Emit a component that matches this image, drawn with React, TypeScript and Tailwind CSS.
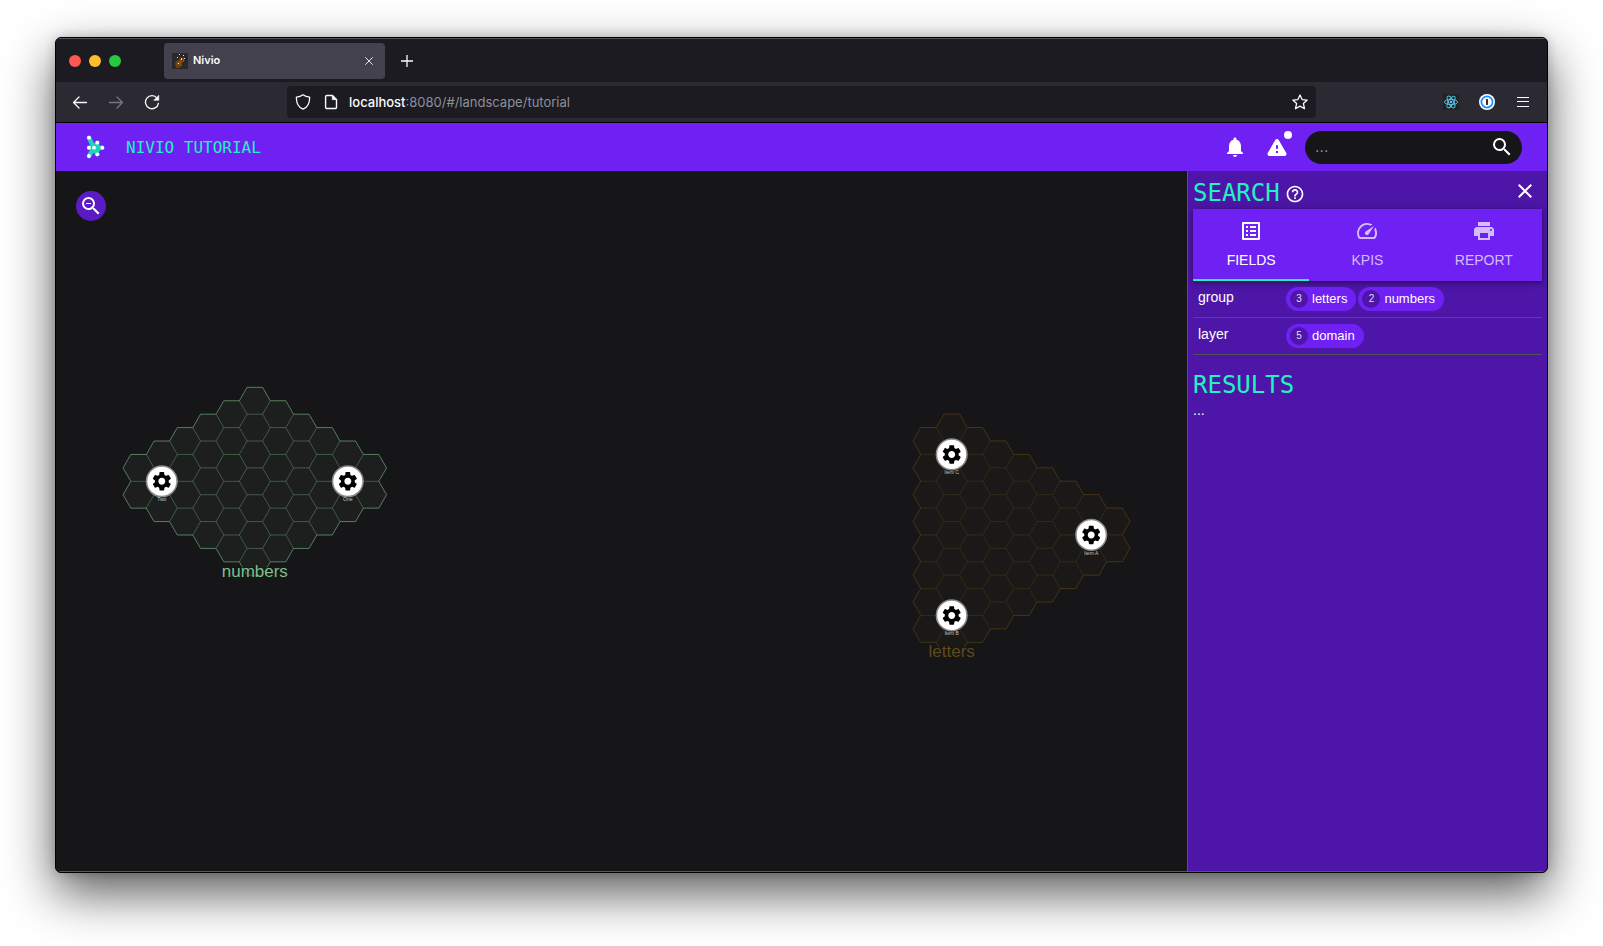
import React from "react";
import {
  MdNotifications,
  MdSearch,
  MdClose,
  MdHelpOutline,
  MdListAlt,
  MdSpeed,
  MdPrint,
  MdZoomOut,
} from "react-icons/md";

type Column = { col: number; count: number };
type Item = { x: number; y: number; label: string };
type Cluster = {
  name: string;
  originX: number;
  centerY: number;
  columns: Column[];
  items: Item[];
  labelX: number;
  labelY: number;
  color: string;
  fill: string;
  inner: number;
};

const SIDE = 15.5;
const HEX_H = 26.85;
const COL_W = 23.25;

const CLUSTERS: Cluster[] = [
  {
    name: "numbers",
    originX: 254.8,
    centerY: 481.3,
    columns: [-5, -4, -3, -2, -1, 0, 1, 2, 3, 4, 5].map((col) => ({ col, count: 7 - Math.abs(col) })),
    items: [
      { x: 161.8, y: 481.3, label: "Two" },
      { x: 347.8, y: 481.3, label: "One" },
    ],
    labelX: 254.8,
    labelY: 577,
    color: "#7fbf8a",
    fill: "#1c1f1e",
    inner: 0.38,
  },
  {
    name: "letters",
    originX: 928.5,
    centerY: 534.9,
    columns: [8, 9, 8, 7, 6, 5, 4, 3, 2].map((count, col) => ({ col, count })),
    items: [
      { x: 951.7, y: 454.4, label: "Item C" },
      { x: 1091.2, y: 534.9, label: "Item A" },
      { x: 951.7, y: 615.4, label: "Item B" },
    ],
    labelX: 951.7,
    labelY: 657,
    color: "#5f4a16",
    fill: "#1a1917",
    inner: 0.38,
  },
];

function buildHexes(cluster: Cluster) {
  const edges = new Map<string, { d: string; uses: number }>();
  const cells: string[] = [];
  cluster.columns.forEach(({ col, count }) => {
    const cx = cluster.originX + col * COL_W;
    for (let i = 0; i < count; i++) {
      const cy = cluster.centerY + (i - (count - 1) / 2) * HEX_H;
      const pts = [
        [cx - SIDE, cy],
        [cx - SIDE / 2, cy - HEX_H / 2],
        [cx + SIDE / 2, cy - HEX_H / 2],
        [cx + SIDE, cy],
        [cx + SIDE / 2, cy + HEX_H / 2],
        [cx - SIDE / 2, cy + HEX_H / 2],
      ];
      cells.push(pts.map((p) => p.map((n) => n.toFixed(2)).join(",")).join(" "));
      pts.forEach((a, k) => {
        const b = pts[(k + 1) % 6];
        const key = `${Math.round(a[0] + b[0])}:${Math.round((a[1] + b[1]) / 2)}`;
        const known = edges.get(key);
        if (known) known.uses += 1;
        else edges.set(key, { d: `M${a[0].toFixed(2)} ${a[1].toFixed(2)}L${b[0].toFixed(2)} ${b[1].toFixed(2)}`, uses: 1 });
      });
    }
  });
  const all = [...edges.values()];
  return {
    cells,
    outer: all.filter((e) => e.uses === 1).map((e) => e.d).join(""),
    inner: all.filter((e) => e.uses > 1).map((e) => e.d).join(""),
  };
}

const GEAR =
  "M19.14 12.94c.04-.3.06-.61.06-.94 0-.32-.02-.64-.07-.94l2.03-1.58a.49.49 0 0 0 .12-.61l-1.92-3.32a.488.488 0 0 0-.59-.22l-2.39.96c-.5-.38-1.03-.7-1.62-.94l-.36-2.54a.484.484 0 0 0-.48-.41h-3.84c-.24 0-.43.17-.47.41l-.36 2.54c-.59.24-1.13.57-1.62.94l-2.39-.96c-.22-.08-.47 0-.59.22L2.74 8.87c-.12.21-.08.47.12.61l2.03 1.58c-.05.3-.09.63-.09.94s.02.64.07.94l-2.03 1.58a.49.49 0 0 0-.12.61l1.92 3.32c.12.22.37.29.59.22l2.39-.96c.5.38 1.03.7 1.62.94l.36 2.54c.05.24.24.41.48.41h3.84c.24 0 .44-.17.47-.41l.36-2.54c.59-.24 1.13-.56 1.62-.94l2.39.96c.22.08.47 0 .59-.22l1.92-3.32c.12-.22.07-.47-.12-.61l-2.01-1.58zM12 15.6c-1.98 0-3.6-1.62-3.6-3.6s1.62-3.6 3.6-3.6 3.6 1.62 3.6 3.6-1.62 3.6-3.6 3.6z";

function ClusterShape({ cluster }: { cluster: Cluster }) {
  const { cells, outer, inner } = buildHexes(cluster);
  return (
    <g>
      {cells.map((points) => (
        <polygon key={points} points={points} fill={cluster.fill} />
      ))}
      <path d={inner} stroke={cluster.color} strokeOpacity={cluster.inner} fill="none" />
      <path d={outer} stroke={cluster.color} strokeOpacity={0.6} fill="none" />
      <text
        x={cluster.labelX}
        y={cluster.labelY}
        textAnchor="middle"
        fill={cluster.color}
        stroke="#161618"
        strokeOpacity={0.6}
        strokeWidth={3}
        paintOrder="stroke"
        className="text-[17px]"
      >
        {cluster.name}
      </text>
      {cluster.items.map((item) => (
        <g key={item.label}>
          <circle cx={item.x} cy={item.y} r={15.3} fill="#fff" stroke="#8a8a8a" strokeWidth={1.5} />
          <path d={GEAR} transform={`translate(${item.x - 11.5} ${item.y - 11.5}) scale(0.96)`} fill="#000" />
          <text x={item.x} y={item.y + 20} textAnchor="middle" fill="#c4c4c4" className="text-[5px]">
            {item.label}
          </text>
        </g>
      ))}
    </g>
  );
}

function Favicon() {
  return (
    <svg viewBox="0 0 16 16" className="size-4">
      <rect width="16" height="16" fill="#29282b" />
      <path d="M3 11l1-3 3-1 1-3 2 1 2 0 0 3-2 2 0 3-3 2-3 0z" fill="#6e3d0c" />
      <path d="M5 12l2-4M8 13l1-6M11 9l1-4" stroke="#9a5716" strokeWidth="1" />
      <g fill="#f3e2c8">
        <rect x="7" y="1" width="1" height="1" />
        <rect x="5" y="4" width="1" height="1" />
        <rect x="9" y="5" width="1" height="2" />
        <rect x="11" y="2" width="1" height="1" />
        <rect x="12" y="5" width="1" height="1" />
        <rect x="6" y="10" width="1" height="1" />
      </g>
    </svg>
  );
}

const LOGO_NODES: [number, number][] = [
  [3, 2.7],
  [11.3, 7.7],
  [3, 12.7],
  [8, 12.7],
  [16.3, 12.7],
  [11.3, 19.3],
  [3, 21],
];

function Logo() {
  return (
    <svg viewBox="0 0 20 24" className="h-6 w-5" aria-hidden="true">
      <path
        d="M3 2.7L8 12.7L11.3 7.7M3 12.7H16.3M3 21L8 12.7L11.3 19.3"
        stroke="#1ad6b4"
        strokeWidth="4.4"
        strokeLinejoin="round"
        strokeLinecap="round"
        fill="none"
      />
      <path d="M8 12.7L11.3 7.7L16.3 12.7L11.3 19.3Z" fill="#1ad6b4" />
      {LOGO_NODES.map(([x, y]) => (
        <circle key={`${x}-${y}`} cx={x} cy={y} r="1.9" fill="#fff" />
      ))}
    </svg>
  );
}

function TabStrip() {
  return (
    <div className="flex h-[43px] items-center bg-[#1c1b22] pl-[13px]">
      <div className="flex w-[95px] gap-2">
        <button aria-label="Close window" className="size-3 rounded-full bg-[#ff5751]" />
        <button aria-label="Minimize window" className="size-3 rounded-full bg-[#ffbd2e]" />
        <button aria-label="Zoom window" className="size-3 rounded-full bg-[#28c940]" />
      </div>
      <div className="flex h-9 w-[221px] items-center rounded bg-[#42414d] px-2">
        <Favicon />
        <span className="ml-[5px] flex-1 font-['Inter',sans-serif] text-[11px] font-semibold text-[#fbfbfe]">Nivio</span>
        <button aria-label="Close tab" className="flex size-4 items-center justify-center">
          <svg viewBox="0 0 8 8" className="size-2" stroke="#e6e6ea" strokeWidth="1" fill="none">
            <path d="M0.3 0.3L7.7 7.7M7.7 0.3L0.3 7.7" />
          </svg>
        </button>
      </div>
      <button aria-label="New tab" className="ml-3.5 flex size-4 items-center justify-center">
        <svg viewBox="0 0 12 12" className="size-3" stroke="#fbfbfe" strokeWidth="1.3" fill="none">
          <path d="M6 0V12M0 6H12" />
        </svg>
      </button>
    </div>
  );
}

function ReactBadge() {
  return (
    <svg viewBox="0 0 16 16" className="size-4" fill="none" stroke="#5bc8ee" strokeWidth="0.9">
      <rect width="16" height="16" fill="#222" stroke="none" />
      <ellipse cx="8" cy="8" rx="6.6" ry="2.6" />
      <ellipse cx="8" cy="8" rx="6.6" ry="2.6" transform="rotate(60 8 8)" />
      <ellipse cx="8" cy="8" rx="6.6" ry="2.6" transform="rotate(120 8 8)" />
      <circle cx="8" cy="8" r="1.3" fill="#5bc8ee" stroke="none" />
    </svg>
  );
}

function Toolbar() {
  return (
    <div className="flex h-10 items-center bg-[#2b2a33] pl-4 pr-4">
      <div className="flex w-[215px] shrink-0 gap-5">
        <button aria-label="Back" className="size-4">
          <svg viewBox="0 0 16 16" className="size-4" fill="none" stroke="#fbfbfe" strokeWidth="1.3" strokeLinecap="round" strokeLinejoin="round">
            <path d="M14.5 8.5H1.5M7 3L1.5 8.5L7 14" />
          </svg>
        </button>
        <button aria-label="Forward" className="size-4">
          <svg viewBox="0 0 16 16" className="size-4" fill="none" stroke="#77767e" strokeWidth="1.3" strokeLinecap="round" strokeLinejoin="round">
            <path d="M1.5 8.5H14.5M9 3L14.5 8.5L9 14" />
          </svg>
        </button>
        <button aria-label="Reload" className="size-4">
          <svg viewBox="0 0 16 16" className="size-4" fill="none" stroke="#fbfbfe" strokeWidth="1.3" strokeLinecap="round">
            <path d="M13.2 4.3A6.5 6.5 0 1 0 14.4 9.3" />
            <path d="M14.8 1.6V6.3H10Z" fill="#fbfbfe" strokeWidth="0.6" strokeLinejoin="round" />
          </svg>
        </button>
      </div>
      <div className="flex h-8 flex-1 items-center rounded bg-[#1c1b22] px-2">
        <svg viewBox="0 0 16 16" className="size-4 shrink-0" fill="none" stroke="#fbfbfe" strokeWidth="1.3" strokeLinejoin="round">
          <path d="M8 0.8C6.2 2.2 3.9 3 1.4 3.1C1.2 8.4 3 13 8 15.2C13 13 14.8 8.4 14.6 3.1C12.1 3 9.8 2.2 8 0.8Z" />
        </svg>
        <svg viewBox="0 0 16 16" className="ml-3 size-4 shrink-0" fill="none" stroke="#fbfbfe" strokeWidth="1.4" strokeLinejoin="round">
          <path d="M9.5 1.5H4A1.2 1.2 0 0 0 2.6 2.8V13.2A1.2 1.2 0 0 0 4 14.5H12.2A1.2 1.2 0 0 0 13.5 13.2V5.5Z" />
          <path d="M9.3 1.3V5.6H13.6Z" fill="#fbfbfe" strokeWidth="0.8" />
        </svg>
        <p className="ml-2.5 flex-1 pt-0.5 font-['Inter',sans-serif] text-[13px] text-[#8f8f98]">
          <span className="font-medium text-[#fbfbfe]">localhost</span>:8080/#/landscape/tutorial
        </p>
        <button aria-label="Bookmark this page" className="size-4">
          <svg viewBox="0 0 16 16" className="size-4" fill="none" stroke="#fbfbfe" strokeWidth="1.3" strokeLinejoin="round">
            <path d="M8 1L10.1 5.6L15.2 6.1L11.4 9.6L12.5 14.7L8 12.1L3.5 14.7L4.6 9.6L0.8 6.1L5.9 5.6Z" />
          </svg>
        </button>
      </div>
      <div className="ml-[127px] flex shrink-0 gap-5">
        <button aria-label="React Developer Tools" className="size-4">
          <ReactBadge />
        </button>
        <button aria-label="1Password" className="size-4">
          <svg viewBox="0 0 16 16" className="size-4">
            <circle cx="8" cy="8" r="8" fill="#fff" />
            <circle cx="8" cy="8" r="5.6" fill="#fff" stroke="#1a8cff" strokeWidth="1.7" />
            <rect x="7.1" y="5" width="1.8" height="6" rx="0.4" fill="#1b1b22" />
          </svg>
        </button>
        <button aria-label="Application menu" className="size-4">
          <svg viewBox="0 0 16 16" className="size-4" stroke="#fbfbfe" strokeWidth="1">
            <path d="M2 3.5H14M2 7.5H14M2 12.5H14" />
          </svg>
        </button>
      </div>
    </div>
  );
}

function AppBar() {
  return (
    <header className="flex h-12 items-center bg-[#6f20f3] pl-[30px] pr-[25px] text-white">
      <Logo />
      <h1 className="ml-5 flex-1 pt-0.5 font-['DejaVu_Sans_Mono',monospace] text-base text-[#22f2c2]">NIVIO TUTORIAL</h1>
      <button aria-label="Notifications" className="size-6">
        <MdNotifications className="size-6" />
      </button>
      <button aria-label="Warnings" className="relative ml-[18px] size-6">
        <svg viewBox="0 0 24 24" className="size-6" fill="currentColor">
          <path d="M4.47 21h15.06c1.54 0 2.5-1.67 1.73-3L13.73 4.99c-.77-1.33-2.69-1.33-3.46 0L2.74 18c-.77 1.33.19 3 1.73 3zM12 14c-.55 0-1-.45-1-1v-2c0-.55.45-1 1-1s1 .45 1 1v2c0 .55-.45 1-1 1zm1 4h-2v-2h2v2z" />
        </svg>
        <span className="absolute -top-1 -right-[3px] size-2 rounded-full bg-white" />
      </button>
      <label className="ml-4 flex h-[33px] w-[217px] items-center rounded-full bg-[#161618] pl-2.5 pr-2">
        <input
          aria-label="Search"
          placeholder="..."
          className="min-w-0 flex-1 bg-transparent font-['Liberation_Sans',sans-serif] text-base text-white outline-none placeholder:text-[#8d8d8e]"
        />
        <MdSearch className="size-6" />
      </label>
    </header>
  );
}

function Chip({ count, label }: { count: number; label: string }) {
  return (
    <button className="flex h-6 items-center rounded-full bg-[#6f20f3] pl-1 pr-[9px] text-[13px] text-white">
      <span className="mr-1 flex size-[18px] items-center justify-center rounded-full bg-[#4d16a8] text-[10px] text-[#e4dcf2]">
        {count}
      </span>
      {label}
    </button>
  );
}

const FIELDS = [
  { name: "group", values: [{ count: 3, label: "letters" }, { count: 2, label: "numbers" }] },
  { name: "layer", values: [{ count: 5, label: "domain" }] },
];

const TABS = [
  { label: "FIELDS", Icon: MdListAlt, active: true },
  { label: "KPIS", Icon: MdSpeed, active: false },
  { label: "REPORT", Icon: MdPrint, active: false },
];

function SearchPanel() {
  return (
    <aside className="w-[360px] shrink-0 border-l border-[#6a3bb8] bg-[#4d16a8] px-[5px] text-white">
      <div className="flex h-[38px] items-center">
        <h2 className="mt-1.5 font-['DejaVu_Sans_Mono',monospace] text-2xl text-[#22f2c2]">SEARCH</h2>
        <button aria-label="Help" className="mt-2 ml-[5px]">
          <MdHelpOutline className="size-5" />
        </button>
        <button aria-label="Close" className="mt-0.5 mr-[5px] ml-auto">
          <MdClose className="size-6" />
        </button>
      </div>
      <div role="tablist" className="grid h-[72px] grid-cols-3 bg-[#6f20f3] shadow-[0_2px_4px_rgba(0,0,0,0.3),0_1px_10px_rgba(0,0,0,0.2)]">
        {TABS.map(({ label, Icon, active }) => (
          <button
            key={label}
            role="tab"
            aria-selected={active}
            className={
              active
                ? "flex flex-col items-center gap-[7px] border-b-2 border-[#22f2c2] pt-2.5 text-sm"
                : "flex flex-col items-center gap-[7px] border-b-2 border-transparent pt-2.5 text-sm text-[#d4bcfb]"
            }
          >
            <Icon className="size-6" />
            {label}
          </button>
        ))}
      </div>
      <table className="w-full border-separate border-spacing-0 text-sm">
        <tbody>
          {FIELDS.map((field) => (
            <tr key={field.name} className="h-[37px]">
              <th scope="row" className="w-[93px] border-b border-[#515151] p-0 pb-1 pl-[5px] text-left font-normal">{field.name}</th>
              <td className="border-b border-[#515151] p-0">
                <div className="flex gap-0.5">
                  {field.values.map((v) => (
                    <Chip key={v.label} count={v.count} label={v.label} />
                  ))}
                </div>
              </td>
            </tr>
          ))}
        </tbody>
      </table>
      <h2 className="mt-3.5 font-['DejaVu_Sans_Mono',monospace] text-2xl text-[#22f2c2]">RESULTS</h2>
      <p className="text-sm leading-[18px]">...</p>
    </aside>
  );
}

export default function App() {
  return (
    <div className="flex min-h-screen bg-white px-[55px] pt-[37px] pb-[73px] font-['Liberation_Sans',Arial,sans-serif]">
      <div className="flex flex-1 flex-col overflow-hidden rounded-md border border-black bg-[#161618] shadow-[0_20px_50px_rgba(0,0,0,0.65),0_0_12px_rgba(0,0,0,0.2)]">
        <div className="flex flex-1 flex-col border-t border-b border-[#58585c]">
          <TabStrip />
          <Toolbar />
          <div className="border-b border-black" />
          <AppBar />
          <div className="flex flex-1">
            <main className="relative flex min-w-0 flex-1">
              <svg viewBox="56 171 1131 700" className="h-full w-full" role="img" aria-label="Landscape map">
                {CLUSTERS.map((cluster) => (
                  <ClusterShape key={cluster.name} cluster={cluster} />
                ))}
              </svg>
              <button
                aria-label="Zoom out"
                className="absolute top-5 left-5 flex size-[30px] items-center justify-center rounded-full bg-[#5a1bc4] text-white"
              >
                <MdZoomOut className="size-6" />
              </button>
            </main>
            <SearchPanel />
          </div>
        </div>
      </div>
    </div>
  );
}
